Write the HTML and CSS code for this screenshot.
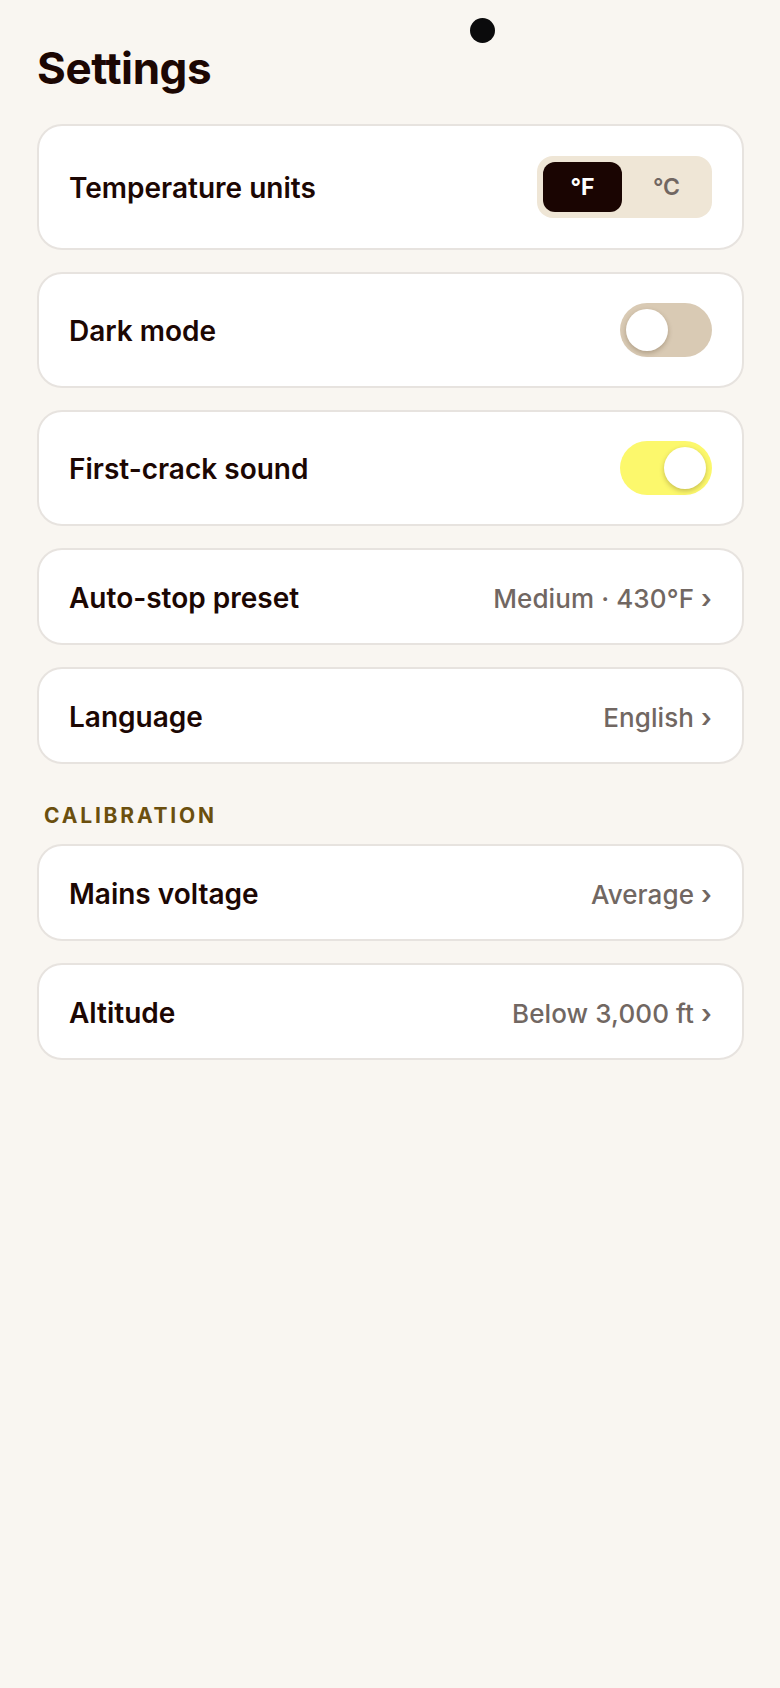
FILE: index.html
```html
<!DOCTYPE html>
<html lang="en">
<head>
<meta charset="utf-8">
<meta name="viewport" content="width=780">
<title>Settings</title>
<link rel="stylesheet" href="styles.css">
</head>
<body>
<div class="camera"></div>
<main class="page">
  <h1 class="title">Settings</h1>
  <div class="list">
    <div class="card card-segment">
      <span class="label">Temperature units</span>
      <div class="segment">
        <span class="seg seg-active">°F</span>
        <span class="seg">°C</span>
      </div>
    </div>
    <div class="card">
      <span class="label">Dark mode</span>
      <span class="toggle"><span class="knob"></span></span>
    </div>
    <div class="card">
      <span class="label">First-crack sound</span>
      <span class="toggle toggle-on"><span class="knob"></span></span>
    </div>
    <div class="card">
      <span class="label">Auto-stop preset</span>
      <span class="value">Medium · 430°F <span class="chev">›</span></span>
    </div>
    <div class="card">
      <span class="label">Language</span>
      <span class="value">English <span class="chev">›</span></span>
    </div>
  </div>
  <h2 class="section">CALIBRATION</h2>
  <div class="list">
    <div class="card">
      <span class="label">Mains voltage</span>
      <span class="value">Average <span class="chev">›</span></span>
    </div>
    <div class="card">
      <span class="label">Altitude</span>
      <span class="value">Below 3,000 ft <span class="chev">›</span></span>
    </div>
  </div>
</main>
</body>
</html>
```
FILE: styles.css
```css
html, body {
  margin: 0;
  padding: 0;
}
body {
  background: #f9f6f1;
  font-family: Inter, "Noto Sans", sans-serif;
  color: #1c0703;
  min-height: 1688px;
}
.camera {
  position: absolute;
  left: 470px;
  top: 18px;
  width: 25px;
  height: 25px;
  border-radius: 50%;
  background: #0b0b0c;
}
.page {
  padding: 42px 36px 0 37px;
}
.title {
  margin: 0 0 29px;
  font-size: 44px;
  line-height: 1.2;
  font-weight: 700;
  letter-spacing: -0.4px;
  color: #1c0703;
}
.list {
  display: flex;
  flex-direction: column;
  gap: 22px;
}
.card {
  display: flex;
  align-items: center;
  justify-content: space-between;
  background: #ffffff;
  border: 2px solid #e7e3df;
  border-radius: 25px;
  padding: 29px 30px;
}
.card-segment {
  padding-top: 30px;
  padding-bottom: 30px;
}
.label {
  font-size: 28px;
  line-height: 31px;
  padding-top: 4px;
  font-weight: 600;
  letter-spacing: 0;
  color: #1c0703;
}
.value {
  font-size: 26px;
  line-height: 31px;
  padding-top: 4px;
  font-weight: 500;
  color: #716762;
  letter-spacing: 0.1px;
}
.chev {
  font-weight: 600;
}
.segment {
  display: flex;
  gap: 5px;
  padding: 6px;
  background: #efe6d6;
  border-radius: 16px;
}
.seg {
  width: 79px;
  height: 50px;
  display: flex;
  align-items: center;
  justify-content: center;
  border-radius: 12px;
  font-size: 23px;
  font-weight: 600;
  color: #716762;
}
.seg-active {
  background: #1a0502;
  color: #ffffff;
  font-weight: 700;
}
.toggle {
  display: flex;
  align-items: center;
  width: 92px;
  height: 54px;
  padding: 0 6px;
  box-sizing: border-box;
  border-radius: 27px;
  background: #d9cab4;
}
.toggle-on {
  background: #fcf86c;
  justify-content: flex-end;
}
.knob {
  width: 42px;
  height: 42px;
  border-radius: 50%;
  background: #ffffff;
  box-shadow: 0 2px 5px rgba(60, 40, 10, 0.28);
}
.section {
  margin: 38px 0 14px 7px;
  font-size: 21px;
  line-height: 28px;
  font-weight: 700;
  letter-spacing: 2.8px;
  color: #6b4f0e;
}
```
